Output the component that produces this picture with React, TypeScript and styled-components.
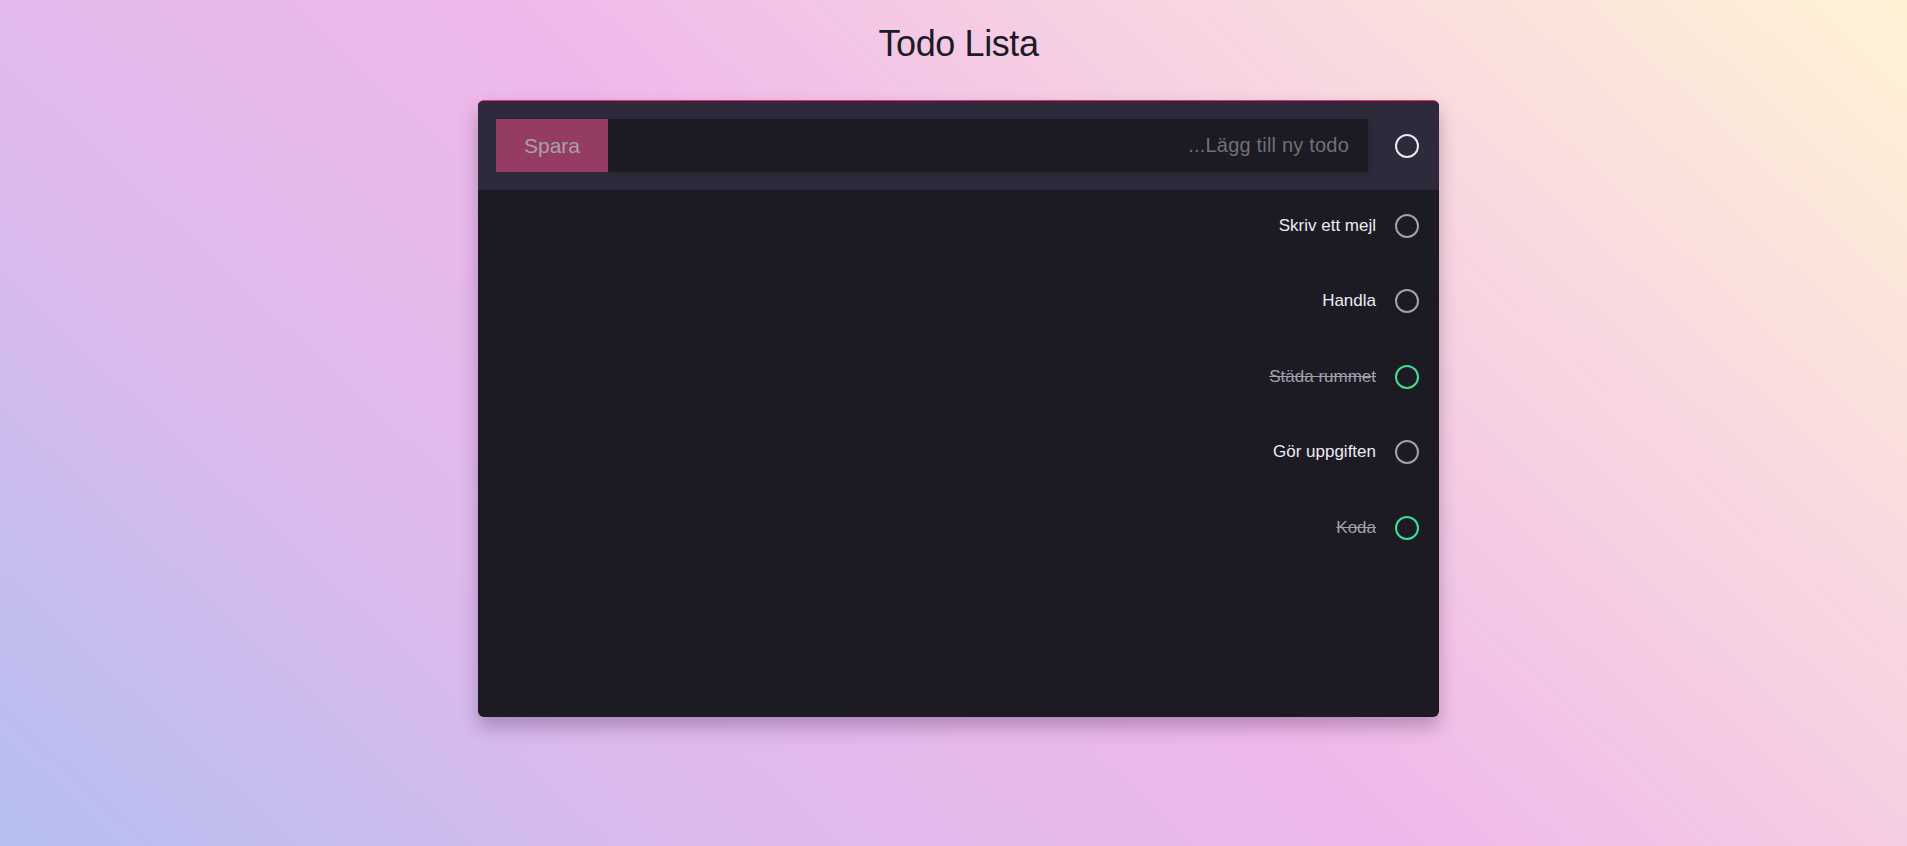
import React from "react";
import styled, { createGlobalStyle } from "styled-components";

const GlobalStyle = createGlobalStyle`
  html, body {
    margin: 0;
    padding: 0;
    height: 100%;
  }
  body {
    font-family: "Liberation Sans", Arial, sans-serif;
    background: linear-gradient(43deg, #b4bff0 0%, #dcbaee 25%, #f0b8ea 50%, #f7d3e2 72%, #fff3d6 100%);
    background-attachment: fixed;
    min-height: 846px;
  }
`;

const Page = styled.div`
  min-height: 846px;
  padding-left: 10px;
  box-sizing: border-box;
  display: flex;
  flex-direction: column;
  align-items: center;
`;

const Title = styled.h1`
  margin: 23px 0 0;
  font-size: 36px;
  font-weight: 400;
  line-height: 41px;
  color: #1d1a28;
  letter-spacing: -0.4px;
`;

const Card = styled.div`
  margin-top: 36px;
  width: 961px;
  height: 617px;
  box-sizing: border-box;
  background: #1c1b23;
  border-top: 1px solid #f0286e;
  border-radius: 6px;
  overflow: hidden;
  box-shadow: 0 10px 18px rgba(60, 20, 70, 0.3);
  display: flex;
  flex-direction: column;
`;

const Header = styled.div`
  background: #2f2a3b;
  padding: 18px 20px 18px 18px;
  display: flex;
  align-items: center;
`;

const SaveButton = styled.button`
  width: 112px;
  height: 53px;
  border: none;
  background: #953c64;
  color: #a7a1ab;
  font-family: "Liberation Sans", Arial, sans-serif;
  font-size: 21px;
  padding: 0;
  cursor: pointer;
`;

const Input = styled.input`
  flex: 1;
  height: 53px;
  box-sizing: border-box;
  border: none;
  outline: none;
  background: #1c1b23;
  color: #e8e6ee;
  font-family: "Liberation Sans", Arial, sans-serif;
  font-size: 20px;
  letter-spacing: 0.2px;
  text-align: right;
  padding: 0 19px 0 12px;
  margin-right: 27px;
  box-shadow: 2px 2px 4px rgba(0, 0, 0, 0.15);
  &::placeholder {
    color: #736e78;
  }
`;

const Circle = styled.span<{ $color: string }>`
  display: block;
  flex: none;
  width: 24px;
  height: 24px;
  box-sizing: border-box;
  border-radius: 50%;
  border: 2px solid ${(p) => p.$color};
`;

const List = styled.ul`
  list-style: none;
  margin: 0;
  padding: 18px 20px 0 0;
  display: flex;
  flex-direction: column;
  gap: 39.4px;
`;

const Item = styled.li`
  height: 36px;
  display: flex;
  align-items: center;
  justify-content: flex-end;
  gap: 19px;
`;

const ItemText = styled.span<{ $done: boolean }>`
  font-size: 17px;
  color: ${(p) => (p.$done ? "#a39eae" : "#eceaf4")};
  text-decoration: ${(p) => (p.$done ? "line-through" : "none")};
`;

const todos = [
  { text: "Skriv ett mejl", done: false },
  { text: "Handla", done: false },
  { text: "Städa rummet", done: true },
  { text: "Gör uppgiften", done: false },
  { text: "Koda", done: true },
];

export default function App() {
  return (
    <>
      <GlobalStyle />
      <Page>
        <Title>Todo Lista</Title>
        <Card>
          <Header>
            <SaveButton>Spara</SaveButton>
            <Input placeholder="...Lägg till ny todo" />
            <Circle $color="#ebe8f2" />
          </Header>
          <List>
            {todos.map((t) => (
              <Item key={t.text}>
                <ItemText $done={t.done}>{t.text}</ItemText>
                <Circle $color={t.done ? "#3fe08e" : "#a29fae"} />
              </Item>
            ))}
          </List>
        </Card>
      </Page>
    </>
  );
}
